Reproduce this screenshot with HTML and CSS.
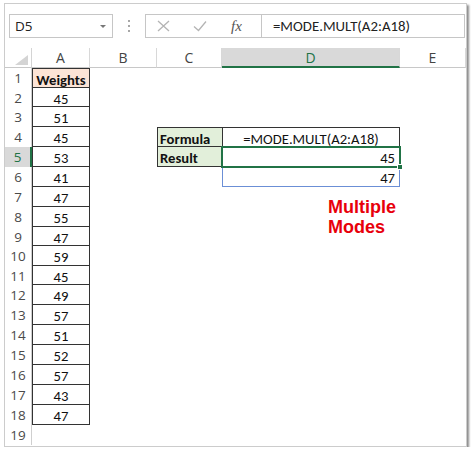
FILE: index.html
```html
<!DOCTYPE html>
<html>
<head>
<meta charset="utf-8">
<link rel="stylesheet" href="styles.css">
</head>
<body>
<div class="frame">
  <div class="toolbar">
    <div class="namebox"><span>D5</span><span class="caret"></span></div>
    <div class="grip"><svg width="4" height="14" viewBox="0 0 4 14"><circle cx="2" cy="2" r="1" fill="#8a8a8a"/><circle cx="2" cy="7" r="1" fill="#8a8a8a"/><circle cx="2" cy="12" r="1" fill="#8a8a8a"/></svg></div>
    <div class="fxbox">
      <svg class="ic-x" width="13" height="12" viewBox="0 0 13 12"><path d="M1 1L12 11M12 1L1 11" stroke="#b4b4b4" stroke-width="1.3" fill="none"/></svg>
      <svg class="ic-ok" width="14" height="12" viewBox="0 0 14 12"><path d="M1 6.5L5.5 10.5L13 1.5" stroke="#b4b4b4" stroke-width="1.3" fill="none"/></svg>
      <span class="fx">fx</span>
    </div>
    <div class="input">=MODE.MULT(A2:A18)</div>
  </div>
  <div class="sheet">
    <div class="corner"><svg width="14" height="11" viewBox="0 0 14 11"><path d="M13 0L13 10L0 10Z" fill="#d4d4d4"/></svg></div>
    <div class="ch">A</div><div class="ch">B</div><div class="ch">C</div><div class="ch sel">D</div><div class="ch">E</div>

    <div class="rh">1</div><div class="c a first hd">Weights</div><div class="c"></div><div class="c"></div><div class="c"></div><div class="c"></div>
    <div class="rh">2</div><div class="c a">45</div><div class="c"></div><div class="c"></div><div class="c"></div><div class="c"></div>
    <div class="rh">3</div><div class="c a">51</div><div class="c"></div><div class="c"></div><div class="c"></div><div class="c"></div>
    <div class="rh">4</div><div class="c a">45</div><div class="c"></div><div class="c lbl top">Formula</div><div class="c f">=MODE.MULT(A2:A18)</div><div class="c"></div>
    <div class="rh sel">5</div><div class="c a">53</div><div class="c"></div><div class="c lbl">Result</div><div class="c num">45</div><div class="c"></div>
    <div class="rh">6</div><div class="c a">41</div><div class="c"></div><div class="c"></div><div class="c num">47</div><div class="c"></div>
    <div class="rh">7</div><div class="c a">47</div><div class="c"></div><div class="c"></div><div class="c"></div><div class="c"></div>
    <div class="rh">8</div><div class="c a">55</div><div class="c"></div><div class="c"></div><div class="c"></div><div class="c"></div>
    <div class="rh">9</div><div class="c a">47</div><div class="c"></div><div class="c"></div><div class="c"></div><div class="c"></div>
    <div class="rh">10</div><div class="c a">59</div><div class="c"></div><div class="c"></div><div class="c"></div><div class="c"></div>
    <div class="rh">11</div><div class="c a">45</div><div class="c"></div><div class="c"></div><div class="c"></div><div class="c"></div>
    <div class="rh">12</div><div class="c a">49</div><div class="c"></div><div class="c"></div><div class="c"></div><div class="c"></div>
    <div class="rh">13</div><div class="c a">57</div><div class="c"></div><div class="c"></div><div class="c"></div><div class="c"></div>
    <div class="rh">14</div><div class="c a">51</div><div class="c"></div><div class="c"></div><div class="c"></div><div class="c"></div>
    <div class="rh">15</div><div class="c a">52</div><div class="c"></div><div class="c"></div><div class="c"></div><div class="c"></div>
    <div class="rh">16</div><div class="c a">57</div><div class="c"></div><div class="c"></div><div class="c"></div><div class="c"></div>
    <div class="rh">17</div><div class="c a">43</div><div class="c"></div><div class="c"></div><div class="c"></div><div class="c"></div>
    <div class="rh">18</div><div class="c a">47</div><div class="c"></div><div class="c"></div><div class="c"></div><div class="c"></div>
    <div class="rh">19</div><div class="c"></div><div class="c"></div><div class="c"></div><div class="c"></div><div class="c"></div>

    <div class="range"></div>
    <div class="active"></div>
    <div class="handle"></div>
    <div class="note">Multiple<br>Modes</div>
  </div>
</div>
</body>
</html>
```
FILE: styles.css
```css
html, body {
  margin: 0;
  padding: 0;
  background: #ffffff;
}

.frame {
  margin: 3px 0 0 4px;
  width: 461px;
  height: 442px;
  border: 1px solid #cccccc;
  box-shadow: 2px 2px 2px rgba(0, 0, 0, 0.45);
  background: #ffffff;
  overflow: hidden;
  font-family: "Carlito", "Lato", sans-serif;
  color: #111111;
}

.toolbar {
  display: flex;
  height: 24px;
  margin-top: 10px;
  padding-left: 4px;
}

.namebox {
  width: 104px;
  box-sizing: border-box;
  border: 1px solid #c6c6c6;
  display: flex;
  align-items: center;
  justify-content: space-between;
  padding: 0 6px 0 5px;
  font: 13.5px "Open Sans", sans-serif;
  color: #222222;
}

.caret {
  width: 0;
  height: 0;
  border-left: 3px solid transparent;
  border-right: 3px solid transparent;
  border-top: 3px solid #777777;
}

.grip {
  width: 32px;
  display: flex;
  justify-content: center;
  align-items: center;
}

.fxbox {
  width: 116px;
  box-sizing: border-box;
  border: 1px solid #c6c6c6;
  border-right: none;
  display: flex;
  align-items: center;
}

.ic-x {
  margin-left: 11px;
}

.ic-ok {
  margin-left: 23px;
}

.fx {
  margin-left: 24px;
  font: italic 15px "Liberation Serif", serif;
  color: #555555;
}

.input {
  width: 204px;
  box-sizing: border-box;
  border: 1px solid #c6c6c6;
  padding-left: 11px;
  display: flex;
  align-items: center;
  font-size: 14.8px;
  color: #222222;
}

.sheet {
  position: relative;
  margin-top: 10px;
  display: grid;
  grid-template-columns: 27px 58px 67px 65px 178px 66px;
  grid-template-rows: 20px 20px 19px 20px 20px 20px 20px 20px 20px 19px 20px 19px 20px 20px 20px 20px 20px 20px 20px 20px;
}

.corner {
  box-sizing: border-box;
  border-right: 1px solid #d4d4d4;
  border-bottom: 1px solid #c8c8c8;
  display: flex;
  justify-content: flex-end;
  align-items: flex-end;
  padding: 0 2px 1px 0;
}

.ch {
  box-sizing: border-box;
  border-right: 1px solid #d8d8d8;
  border-bottom: 1px solid #c8c8c8;
  display: flex;
  align-items: center;
  justify-content: center;
  font: 14px "Open Sans", sans-serif;
  color: #444444;
}

.ch.sel {
  background: #d9d9d9;
  border-bottom: 2px solid #217346;
  color: #217346;
}

.rh {
  box-sizing: border-box;
  border-right: 1px solid #cfcfcf;
  display: flex;
  align-items: center;
  justify-content: center;
  font: 13.5px "Open Sans", sans-serif;
  color: #4a4a4a;
}

.rh.sel {
  background: #d9d9d9;
  border-right: 2px solid #217346;
  color: #217346;
}

.c {
  box-sizing: border-box;
  padding-top: 2px;
  line-height: 18px;
  font-size: 14.67px;
  white-space: nowrap;
}

.a {
  border-left: 1px solid #333333;
  border-right: 1px solid #333333;
  border-bottom: 1px solid #333333;
  text-align: center;
}

.a.first {
  border-top: 1px solid #333333;
}

.hd {
  font-weight: bold;
  background: #fce4d6;
}

.lbl {
  background: #e2efda;
  font-weight: bold;
  border-left: 1px solid #333333;
  border-bottom: 1px solid #333333;
  padding-left: 2px;
}

.lbl.top {
  border-top: 1px solid #333333;
}

.f {
  border: 1px solid #333333;
  text-align: center;
}

.num {
  text-align: right;
  padding-right: 5px;
}

.range {
  position: absolute;
  left: 217px;
  top: 99px;
  width: 178px;
  height: 40px;
  box-sizing: border-box;
  border: 1px solid #6b8fd6;
}

.active {
  position: absolute;
  left: 216px;
  top: 98px;
  width: 180px;
  height: 22px;
  box-sizing: border-box;
  border: 2px solid #217346;
}

.handle {
  position: absolute;
  left: 392px;
  top: 116px;
  width: 6px;
  height: 6px;
  box-sizing: border-box;
  background: #217346;
  border: 1px solid #ffffff;
}

.note {
  position: absolute;
  left: 323px;
  top: 149px;
  font: bold 18px/20px "Liberation Sans", Arial, sans-serif;
  color: #e8000b;
}
```
